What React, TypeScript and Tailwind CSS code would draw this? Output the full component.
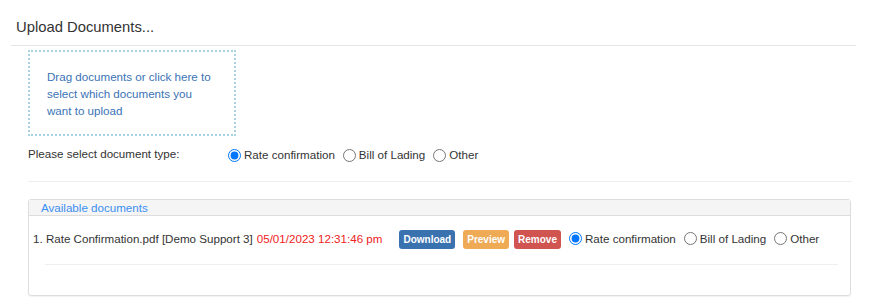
import React from "react"

const font = { fontFamily: '"Liberation Sans", Arial, sans-serif' }

function TypeRadios({ name }: { name: string }) {
  const opts = ["Rate confirmation", "Bill of Lading", "Other"]
  return (
    <div className="flex items-center shrink-0 whitespace-nowrap text-[11.6px] text-[#333]">
      {opts.map((o, i) => (
        <label key={o} className="flex items-center mr-[3px]">
          <input
            type="radio"
            name={name}
            defaultChecked={i === 0}
            className="w-[13px] h-[13px] m-0 ml-[5px] mr-[3px] accent-[#0075ff]"
          />
          {o}
        </label>
      ))}
    </div>
  )
}

export default function App() {
  return (
    <div className="bg-white w-[871px] h-[306px]" style={font}>
      <div className="ml-[11px] w-[845px]">
        <div className="h-[46px] flex items-center pl-[5px] pt-[10px] border-b border-[#e5e5e5] text-[14.8px] text-[#333]">
          Upload Documents...
        </div>
        <div className="pl-[17px] w-[841px]">
          <div className="mt-[4px] w-[208px] h-[86px] border-2 border-dotted border-[#a9d2e3] pl-[17px] pt-[16px] pr-[22px] text-[11.6px] leading-[17px] text-[#3a73b5] cursor-pointer">
            Drag documents or click here to select which documents you want to upload
          </div>
          <div className="flex items-center mt-[12px] h-[14px]">
            <div className="w-[195px] text-[11.6px] text-[#333] -mt-[2px]">Please select document type:</div>
            <TypeRadios name="type" />
          </div>
          <div className="mt-[19px] border-t border-[#eee]" />
          <div className="mt-[17px] w-[823px] h-[97px] border border-[#ddd] rounded-[3px] shadow-[0_1px_1px_rgba(0,0,0,0.05)]">
            <div className="h-[16px] bg-[#f5f5f5] border-b border-[#ddd] pl-[12px] text-[11.6px] leading-[16px] text-[#3b8ff0]">
              Available documents
            </div>
            <div className="flex items-center h-[44px] pl-[4px] pt-[2px] text-[11.6px] text-[#333] whitespace-nowrap">
              <span>1. Rate Confirmation.pdf [Demo Support 3]</span>
              <span className="ml-[4px] text-[#ee2222]">05/01/2023 12:31:46 pm</span>
              <div className="flex items-center shrink-0 ml-[17px] mr-[3px]">
                <button className="h-[19px] px-[4px] rounded-[3px] bg-[#3a72b0] text-white text-[10px] font-bold">Download</button>
                <button className="ml-[8px] h-[19px] px-[4px] rounded-[3px] bg-[#eeaa55] text-white text-[10px] font-bold">Preview</button>
                <button className="ml-[5px] h-[19px] px-[4px] rounded-[3px] bg-[#d05450] text-white text-[10px] font-bold">Remove</button>
              </div>
              <TypeRadios name="row1" />
            </div>
            <div className="mt-[4px] ml-[16px] mr-[12px] border-t border-[#eee]" />
          </div>
        </div>
      </div>
    </div>
  )
}
